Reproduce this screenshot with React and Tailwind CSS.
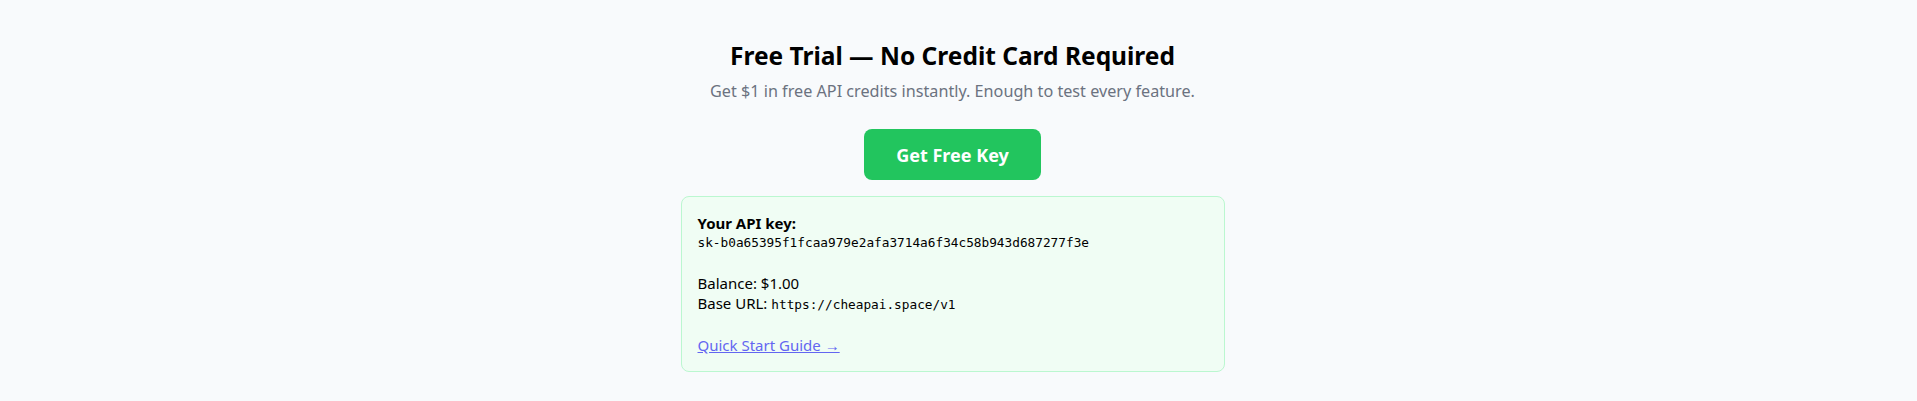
export default function App() {
  return (
    <div className="min-h-screen bg-[#f8fafc] pr-3 font-['Noto_Sans',sans-serif] text-black">
      <div className="mx-auto flex max-w-[544px] flex-col items-center pt-[40px]">
        <h2 className="text-[24.5px] font-bold leading-8">Free Trial — No Credit Card Required</h2>
        <p className="mt-[7px] text-[16.2px] leading-6 text-[#6b7280]">
          Get $1 in free API credits instantly. Enough to test every feature.
        </p>

        <button className="mt-[26px] rounded-lg bg-[#22c55e] px-8 py-[11.5px] text-lg font-bold leading-7 text-white">
          Get Free Key
        </button>

        <div className="mt-[16px] w-full rounded-lg border border-[#bbf7d0] bg-[#f0fdf4] p-4 text-[15px] leading-5">
          <div className="font-bold">Your API key:</div>
          <div className="font-['DejaVu_Sans_Mono',monospace] text-[12.75px]">
            sk-b0a65395f1fcaa979e2afa3714a6f34c58b943d687277f3e
          </div>
          <div className="h-5" />
          <div>Balance: $1.00</div>
          <div>
            Base URL: <code className="font-['DejaVu_Sans_Mono',monospace] text-[12.75px]">https://cheapai.space/v1</code>
          </div>
          <div className="h-5" />
          <a href="#" className="text-[#6366f1] underline">
            Quick Start Guide →
          </a>
        </div>
      </div>
    </div>
  );
}
